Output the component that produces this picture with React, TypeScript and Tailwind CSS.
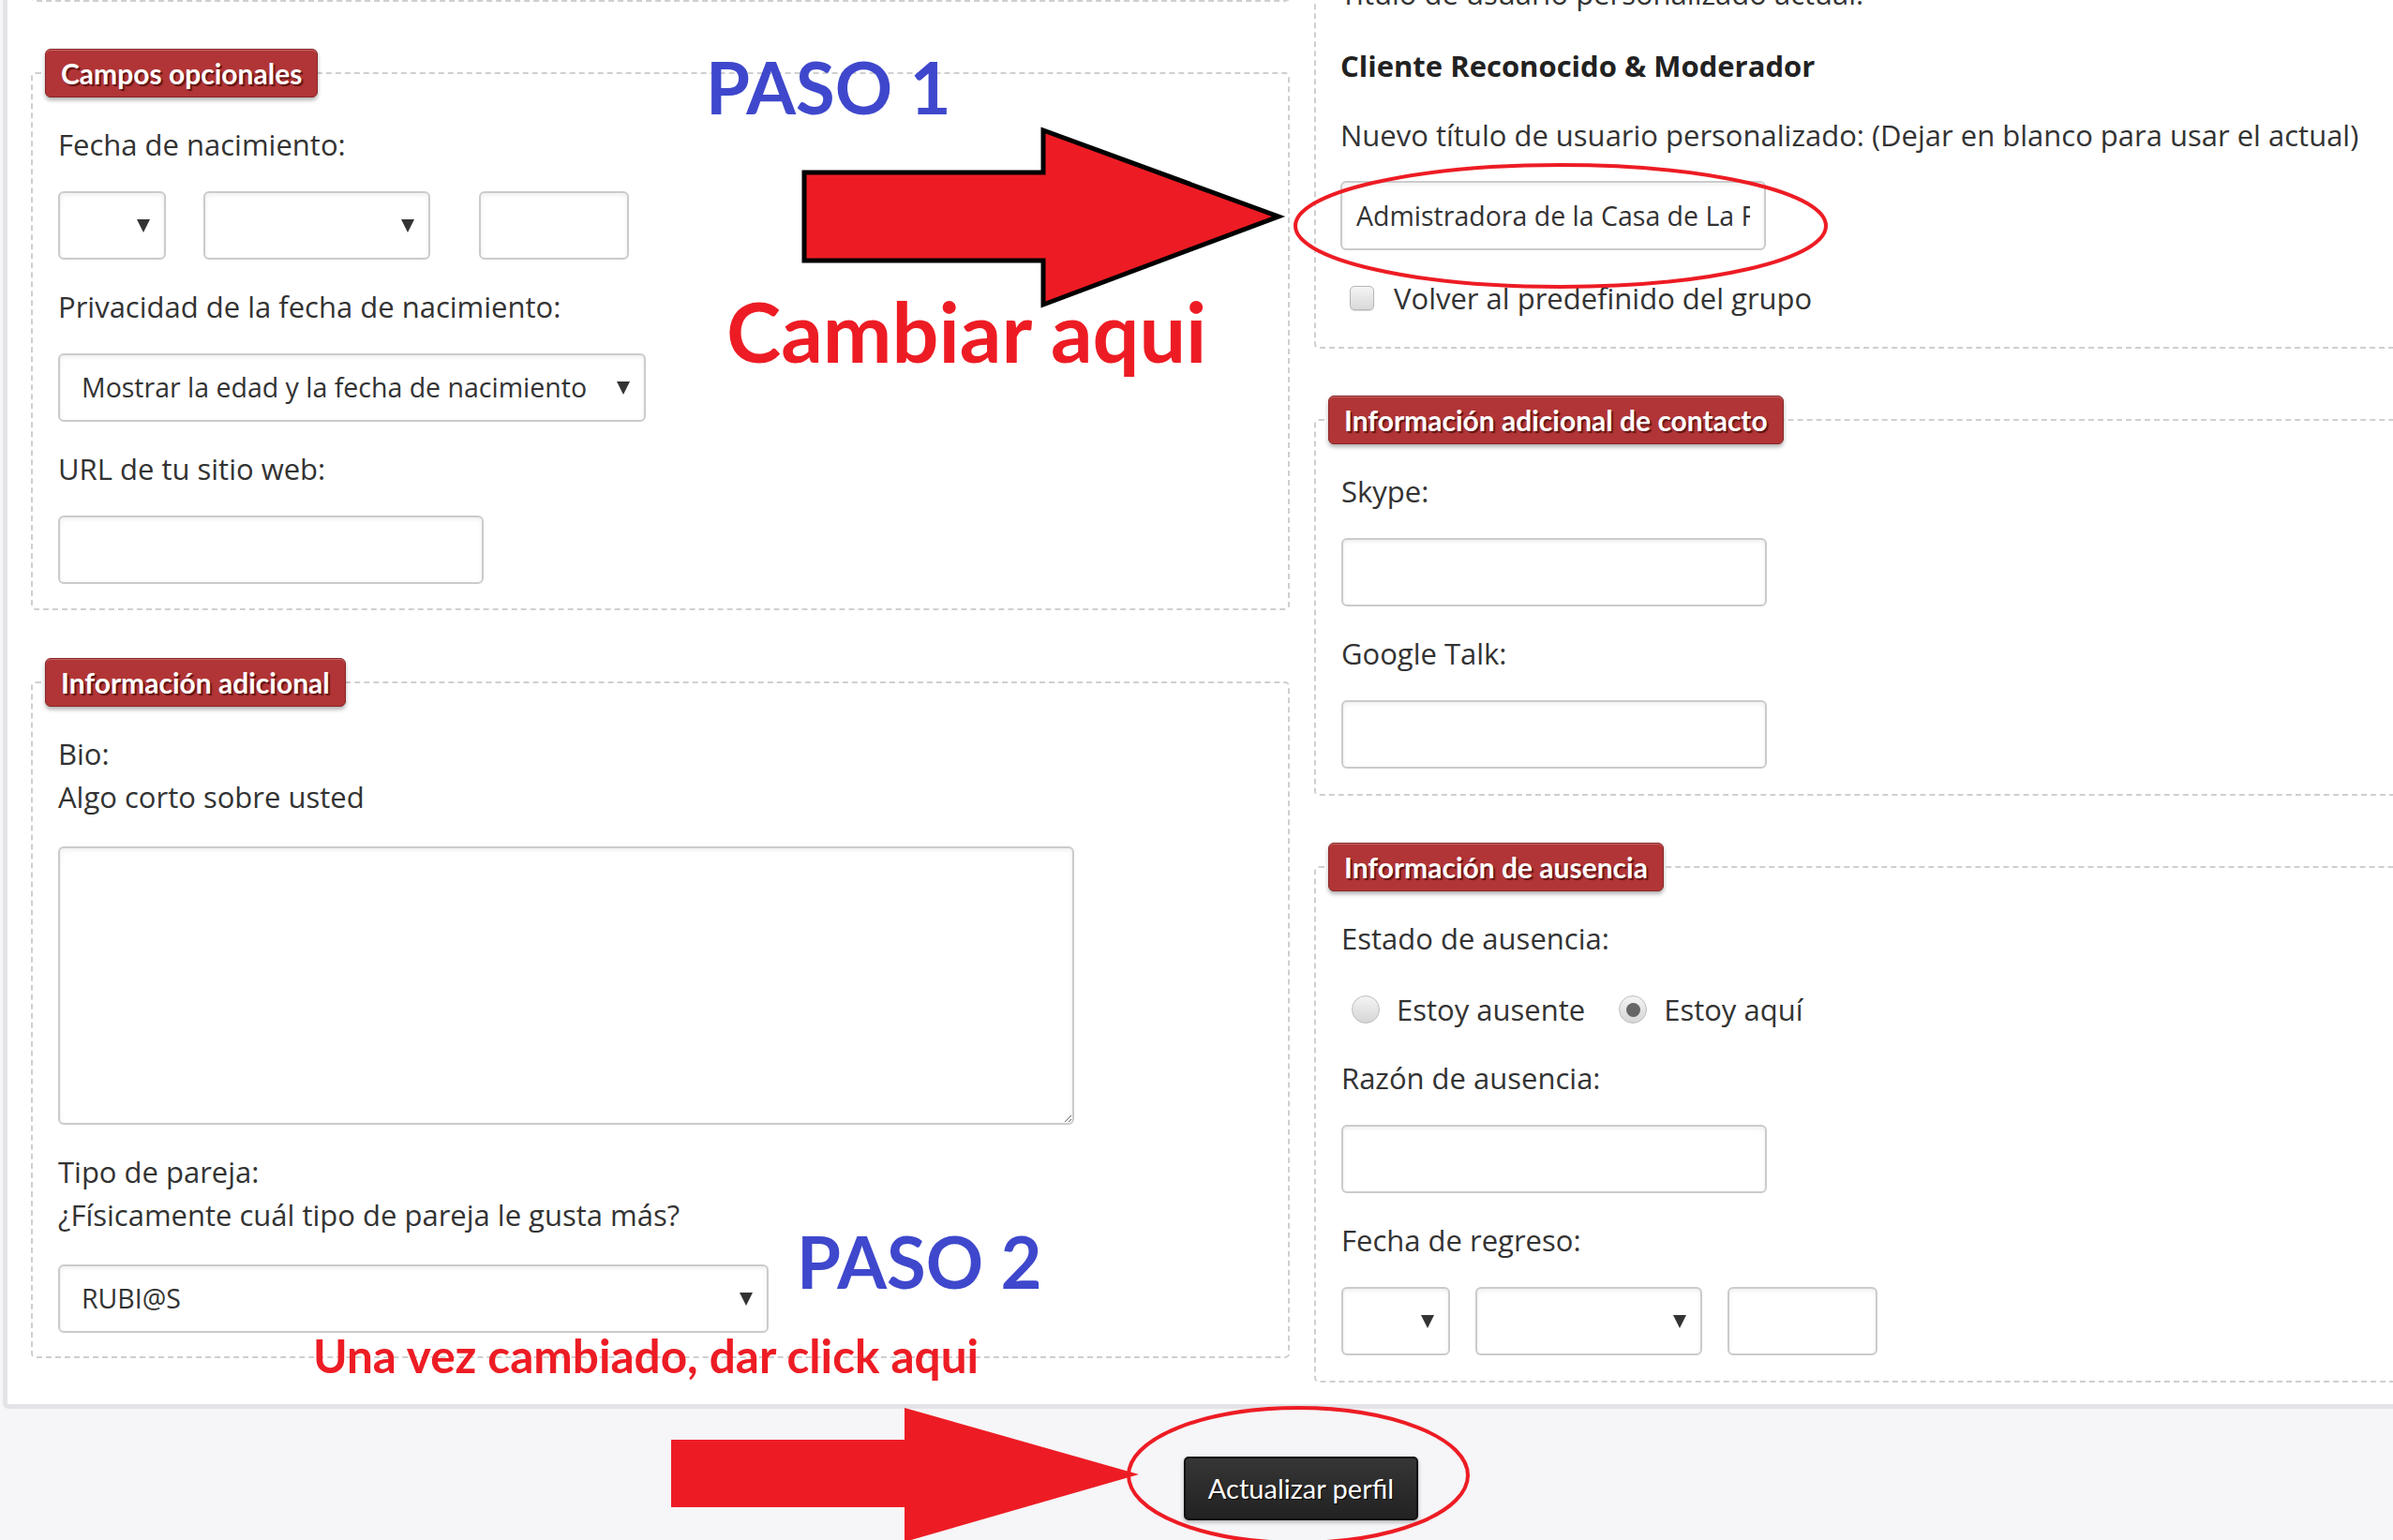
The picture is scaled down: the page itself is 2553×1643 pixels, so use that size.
import type { ReactNode } from 'react'

const box = 'rounded-[6px] border-2 border-[#cbcbcb] bg-white shadow-[inset_0_2px_5px_rgba(0,0,0,0.07)]'

function Legend({ children }: { children: ReactNode }) {
  return (
    <legend className="h-[52px] rounded-[6px] border border-[#8a2627] bg-[#b13536] px-[16px] font-[Lato,sans-serif] text-[30px] font-bold leading-[50px] text-white shadow-[inset_0_1px_0_rgba(255,255,255,0.25),0_3px_4px_rgba(0,0,0,0.3)] [text-shadow:2px_2px_1px_rgba(70,10,10,0.75)]">
      {children}
    </legend>
  )
}

function Fieldset({ legend, className, children }: { legend: string; className: string; children: ReactNode }) {
  return (
    <fieldset className={`min-w-0 rounded-[5px] border-2 border-dashed border-[#cfcfcf] px-[13px] pt-[27px] ${className}`}>
      <Legend>{legend}</Legend>
      <div className="flex flex-col items-start pl-[14px]">{children}</div>
    </fieldset>
  )
}

function Label({ children, className = '' }: { children: ReactNode; className?: string }) {
  return <div className={`h-[46px] whitespace-nowrap leading-[46px] ${className}`}>{children}</div>
}

function Select({ className, text = '' }: { className: string; text?: string }) {
  return (
    <div className={`flex h-[73px] items-center justify-between pl-[23px] pr-[15px] text-[28.5px] ${box} ${className}`}>
      <span className="whitespace-nowrap">{text}</span>
      <span className="h-0 w-0 border-x-[7px] border-t-[14px] border-x-transparent border-t-[#333]" />
    </div>
  )
}

function Input({ className, value = '' }: { className: string; value?: string }) {
  return (
    <input
      readOnly
      value={value}
      className={`h-[73px] px-[15px] text-[28.5px] text-[#333] outline-none ${box} ${className}`}
    />
  )
}

function Radio({ checked = false }: { checked?: boolean }) {
  return (
    <span className="flex h-[30px] w-[30px] items-center justify-center rounded-full border border-[#bdbdbd] bg-linear-to-b from-[#f4f4f4] to-[#d6d6d6]">
      {checked && <span className="h-[15px] w-[15px] rounded-full bg-[#666]" />}
    </span>
  )
}

function LeftColumn() {
  return (
    <div className="flex w-[1343px] shrink-0 flex-col">
      <div className="h-[102px] rounded-b-[5px] border-2 border-t-0 border-dashed border-[#cfcfcf]" />

      <Fieldset legend="Campos opcionales" className="mt-[50px] pb-[26px]">
        <Label>Fecha de nacimiento:</Label>
        <div className="mt-[27px] flex">
          <Select className="w-[115px]" />
          <Select className="ml-[40px] w-[242px]" />
          <Input className="ml-[52px] w-[160px]" />
        </div>
        <Label className="mt-[27px]">Privacidad de la fecha de nacimiento:</Label>
        <Select className="mt-[27px] w-[627px]" text="Mostrar la edad y la fecha de nacimiento" />
        <Label className="mt-[27px]">URL de tu sitio web:</Label>
        <Input className="mt-[27px] w-[454px]" />
      </Fieldset>

      <Fieldset legend="Información adicional" className="mt-[51px] pb-[25px]">
        <Label>Bio:</Label>
        <Label>Algo corto sobre usted</Label>
        <textarea readOnly className={`mt-[30px] h-[297px] w-[1084px] outline-none ${box}`} />
        <Label className="mt-[27px]">Tipo de pareja:</Label>
        <Label>¿Físicamente cuál tipo de pareja le gusta más?</Label>
        <Select className="mt-[30px] w-[758px]" text="RUBI@S" />
      </Fieldset>
    </div>
  )
}

function RightColumn() {
  return (
    <div className="ml-[26px] flex w-[1343px] shrink-0 flex-col">
      <div className="flex flex-col items-start rounded-b-[5px] border-2 border-t-0 border-dashed border-[#cfcfcf] pb-[29px] pl-[26px] pt-[70px]">
        <Label>Título de usuario personalizado actual:</Label>
        <Label className="mt-[31px] font-bold text-[#222]">Cliente Reconocido &amp; Moderador</Label>
        <Label className="mt-[28px]">Nuevo título de usuario personalizado: (Dejar en blanco para usar el actual)</Label>
        <Input className="mt-[26px] h-[74px] w-[454px]" value="Admistradora de la Casa de La Familia" />
        <div className="mt-[28px] flex h-[46px] items-center gap-[21px] pl-[10px]">
          <span className="h-[26px] w-[26px] rounded-[5px] border border-[#b5b5b5] bg-linear-to-b from-[#f4f4f4] to-[#d9d9d9] shadow-[0_1px_1px_rgba(0,0,0,0.15)]" />
          <span className="leading-[46px]">Volver al predefinido del grupo</span>
        </div>
      </div>

      <Fieldset legend="Información adicional de contacto" className="mt-[50px] pb-[27px]">
        <Label>Skype:</Label>
        <Input className="mt-[27px] w-[454px]" />
        <Label className="mt-[27px]">Google Talk:</Label>
        <Input className="mt-[27px] w-[454px]" />
      </Fieldset>

      <Fieldset legend="Información de ausencia" className="mt-[50px] pb-[27px]">
        <Label>Estado de ausencia:</Label>
        <div className="mt-[30px] flex h-[46px] items-center pl-[11px] leading-[46px]">
          <Radio />
          <span className="ml-[18px]">Estoy ausente</span>
          <span className="ml-[36px]">
            <Radio checked />
          </span>
          <span className="ml-[18px]">Estoy aquí</span>
        </div>
        <Label className="mt-[27px]">Razón de ausencia:</Label>
        <Input className="mt-[27px] w-[454px]" />
        <Label className="mt-[27px]">Fecha de regreso:</Label>
        <div className="mt-[27px] flex gap-[27px]">
          <Select className="w-[116px]" />
          <Select className="w-[242px]" />
          <Input className="w-[160px]" />
        </div>
      </Fieldset>
    </div>
  )
}

function Annotations() {
  return (
    <div className="pointer-events-none absolute inset-0 font-[Lato,sans-serif] font-bold">
      <svg width="2553" height="1643" className="absolute left-0 top-0">
        <polygon
          points="858,184 1113,184 1113,139 1364,231 1113,325 1113,278 858,278"
          fill="#ed1c24"
          stroke="#000"
          strokeWidth="5"
          strokeLinejoin="miter"
        />
        <ellipse cx="1665" cy="241" rx="283" ry="65" fill="none" stroke="#ed1c24" strokeWidth="4" />
        <polygon points="716,1536 965,1536 965,1502 1215,1573 965,1645 965,1608 716,1608" fill="#ed1c24" />
        <ellipse cx="1385" cy="1574" rx="181" ry="72" fill="none" stroke="#ed1c24" strokeWidth="4" />
      </svg>
      <span className="absolute left-[753px] top-[55px] text-[76px] leading-none text-[#3f48cc]">PASO 1</span>
      <span className="absolute left-[775px] top-[309px] text-[88px] leading-none text-[#ed1c24]">Cambiar aqui</span>
      <span className="absolute left-[850px] top-[1308px] text-[76px] leading-none text-[#3f48cc]">PASO 2</span>
      <span className="absolute left-[334px] top-[1422px] whitespace-nowrap text-[49.5px] leading-none text-[#ed1c24]">
        Una vez cambiado, dar click aqui
      </span>
    </div>
  )
}

export default function App() {
  return (
    <main className="relative h-[1643px] w-[2553px] overflow-hidden bg-[#f6f5f7] font-['Open_Sans',sans-serif] text-[31px] text-[#333]">
      <section className="-mt-[100px] ml-[3px] flex w-[2800px] rounded-bl-[6px] border-b-[5px] border-l-[5px] border-[#e4e3e8] bg-white pb-[23px] pl-[25px]">
        <LeftColumn />
        <RightColumn />
      </section>
      <div className="pl-[1263px] pt-[51px]">
        <button
          type="button"
          className="h-[68px] w-[250px] rounded-[5px] border-2 border-[#111] bg-linear-to-b from-[#363636] to-[#222] font-[Lato,sans-serif] text-[29px] text-white shadow-[0_2px_4px_rgba(0,0,0,0.3)] [text-shadow:1px_1px_1px_#000]"
        >
          Actualizar perfil
        </button>
      </div>
      <Annotations />
    </main>
  )
}
